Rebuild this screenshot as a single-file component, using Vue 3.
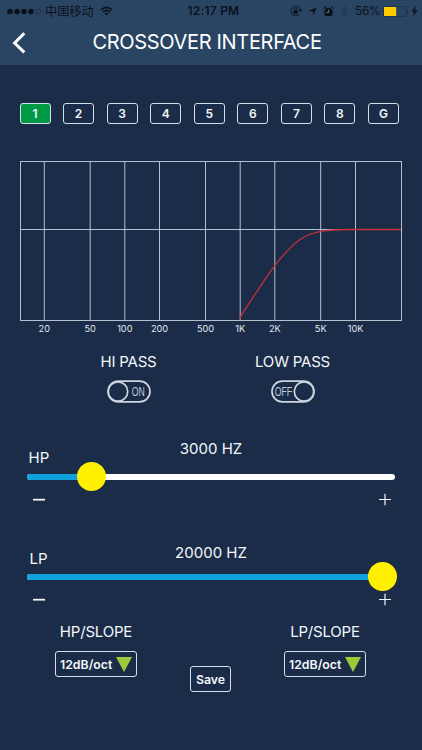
<script setup>
import { ref, computed } from 'vue'

const channels = ['1', '2', '3', '4', '5', '6', '7', '8', 'G']
const activeChannel = ref('1')

// x positions of the frequency grid lines
const ticks = [
  { label: '20', x: 44.3 },
  { label: '50', x: 90.2 },
  { label: '100', x: 124.8 },
  { label: '200', x: 159.5 },
  { label: '500', x: 205.5 },
  { label: '1K', x: 240.2 },
  { label: '2K', x: 274.8 },
  { label: '5K', x: 320.7 },
  { label: '10K', x: 355.5 }
]

const hiPass = ref(true)
const lowPass = ref(false)

const sliders = ref([
  { name: 'HP', hz: 3000, pos: 64 },
  { name: 'LP', hz: 20000, pos: 355 }
])

const slopes = ['HP', 'LP']

const switches = computed(() => [
  { name: 'HI PASS', on: hiPass.value },
  { name: 'LOW PASS', on: lowPass.value }
])

const toggle = (index) => {
  if (index === 0) hiPass.value = !hiPass.value
  else lowPass.value = !lowPass.value
}
</script>

<template>
  <div class="screen">
    <header class="header">
      <div class="status-bar">
        <div class="status-left">
          <svg class="dots" width="35" height="7" viewBox="0 0 35 7">
            <circle v-for="i in 4" :key="i" :cx="3 + (i - 1) * 7" cy="3.5" r="2.8" />
            <circle class="hollow" cx="31.2" cy="3.5" r="2.5" />
          </svg>
          <span class="carrier">中国移动</span>
          <svg class="wifi" width="13" height="10" viewBox="0 0 13 10">
            <path d="M1 3.8Q6.5 -1.2 12 3.8M3 6Q6.5 2.9 10 6" />
            <path class="solid" d="M4.6 7.4Q6.5 6 8.4 7.4L6.5 9.4Z" />
          </svg>
        </div>
        <span class="time">12:17 PM</span>
        <div class="status-right">
          <svg class="lock" width="12" height="12" viewBox="0 0 12 12">
            <path class="line" d="M9.4 9.2A4.8 4.8 0 1 1 10.6 5.2" />
            <path d="M8.8 5H12L10.4 7.3Z" />
            <path class="line" d="M4.3 5.6V4.4a1.4 1.4 0 0 1 2.8 0v1.2" />
            <rect x="3.4" y="5.3" width="4.6" height="3.4" />
          </svg>
          <svg class="arrow" width="9" height="9" viewBox="0 0 9 9">
            <path d="M8.7 0.3L5.3 8.7L4.8 4.2L0.3 3.9Z" />
          </svg>
          <svg class="alarm" width="11" height="11" viewBox="0 0 11 11">
            <circle cx="5.5" cy="6" r="4.3" />
            <path d="M0.5 3.2A2.2 2.2 0 0 1 3.6 0.8ZM10.5 3.2A2.2 2.2 0 0 0 7.4 0.8ZM2 8.5L1.4 10.6L4 9.8ZM9 8.5L9.6 10.6L7 9.8Z" />
            <path class="hands" d="M5.6 3.6V6.4H3.4" />
          </svg>
          <svg class="bluetooth" width="8" height="13" viewBox="0 0 8 13">
            <path d="M0.8 3.6L6.8 9L3.9 12V1L6.8 4L0.8 9.4" />
          </svg>
          <span class="percent">56%</span>
          <svg class="battery" width="26" height="11" viewBox="0 0 26 11">
            <rect class="shell" x="0.5" y="0.6" width="22.6" height="9.8" rx="1" />
            <rect class="charge" x="1" y="1" width="12.2" height="9" />
            <path d="M24 3.7Q25.6 5.5 24 7.3Z" />
          </svg>
          <svg class="bolt" width="7" height="10" viewBox="0 0 7 10">
            <path d="M4.8 0L0.4 5.5H3L2 10L6.6 4.2H4Z" />
          </svg>
        </div>
      </div>
      <div class="nav">
        <svg class="back" width="16" height="24" viewBox="0 0 16 24">
          <path d="M13.3 2.2L3.6 12L13.3 21.3" />
        </svg>
        <h1 class="title">CROSSOVER INTERFACE</h1>
      </div>
    </header>

    <div class="channels">
      <button
        v-for="ch in channels"
        :key="ch"
        :class="['channel', { active: ch === activeChannel }]"
        @click="activeChannel = ch"
      >{{ ch }}</button>
    </div>

    <svg class="chart" width="422" height="186" viewBox="0 154 422 186">
      <rect class="grid" x="20.5" y="161.5" width="381" height="159" />
      <path class="grid" d="M20.5 229.5H401.5" />
      <g v-for="t in ticks" :key="t.label">
        <path class="grid-line" :d="`M${t.x} 161.5V320.5`" />
        <text class="tick" :x="t.x" y="332.3">{{ t.label }}</text>
      </g>
      <path class="curve" d="M239.8 319.5C240 317 241 315.7 242 314.2L256 292.8L268 274.8L275 265.4C285 252.5 292 245 300 239.5C306 235.5 313 232.5 321 231.3C329 230.1 339 229.6 350 229.5H401" />
    </svg>

    <div class="switches">
      <div v-for="(s, i) in switches" :key="s.name" class="switch-item">
        <span class="label">{{ s.name }}</span>
        <svg class="switch" width="44" height="23" viewBox="0 0 44 23" @click="toggle(i)">
          <rect x="1" y="1.1" width="42" height="20.8" rx="10.4" />
          <circle :cx="s.on ? 11 : 33" cy="11.5" r="9.7" />
          <text :x="s.on ? 31.2 : 12.4" y="16.2" :textLength="s.on ? 13 : 17.5" lengthAdjust="spacingAndGlyphs">{{ s.on ? 'ON' : 'OFF' }}</text>
        </svg>
      </div>
    </div>

    <section v-for="s in sliders" :key="s.name" :class="['slider', s.name.toLowerCase()]">
      <div class="slider-head">
        <span class="name">{{ s.name }}</span>
        <span class="value">{{ s.hz }} HZ</span>
      </div>
      <div class="track">
        <div class="fill" :style="{ width: s.pos + 'px' }"></div>
        <div class="knob" :style="{ left: s.pos + 'px' }"></div>
      </div>
      <div class="steps">
        <svg width="12" height="13" viewBox="0 0 12 13"><path class="minus" d="M0 6.7H12" /></svg>
        <svg width="12" height="13" viewBox="0 0 12 13"><path d="M0 6.5H12M6 0.7V12.3" /></svg>
      </div>
    </section>

    <footer class="footer">
      <div v-for="(name, i) in slopes" :key="name" :class="['slope', { last: i === 1 }]">
        <span class="label">{{ name }}/SLOPE</span>
        <button class="select">
          <span>12dB/oct</span>
          <svg width="16" height="15" viewBox="0 0 16 15"><path d="M0 0H16L8 15Z" /></svg>
        </button>
      </div>
      <button class="save">Save</button>
    </footer>
  </div>
</template>

<style>
body {
  margin: 0;
  background: #1a2c47;
}
</style>

<style scoped>
.screen {
  width: 422px;
  height: 750px;
  overflow: hidden;
  background: #1a2c47;
  color: #f4f8fc;
  font-family: Inter, "Noto Sans CJK SC", sans-serif;
}

svg {
  display: block;
  flex: none;
}

button {
  box-sizing: border-box;
  padding: 0;
  border: 1px solid #d5e0ec;
  border-radius: 3px;
  background: transparent;
  color: #f4f8fc;
  font-family: inherit;
  font-weight: 600;
  cursor: pointer;
}

.header {
  height: 65px;
  background: #2a4564;
}

.status-bar {
  display: grid;
  grid-template-columns: 180px 67px 175px;
  height: 21px;
  color: #0b121b;
  fill: #0b121b;
}

.status-left,
.status-right {
  display: flex;
  align-items: center;
}

.status-left {
  padding-left: 7px;
}

.hollow {
  fill: none;
  stroke: #172538;
  stroke-width: 0.6;
}

.carrier {
  width: 49px;
  margin-left: 3px;
  font-family: "Noto Sans CJK SC", sans-serif;
  font-size: 12.2px;
  line-height: 21px;
  white-space: nowrap;
}

.wifi {
  margin-left: 6px;
  fill: none;
  stroke: #0b121b;
  stroke-width: 1.7;
}

.wifi .solid {
  fill: #0b121b;
  stroke: none;
}

.time {
  font-size: 12px;
  font-weight: 600;
  line-height: 22px;
  letter-spacing: 0.2px;
  text-align: center;
  white-space: nowrap;
}

.status-right {
  padding-left: 43px;
}

.line {
  fill: none;
  stroke: #0b121b;
  stroke-width: 0.9;
}

.arrow {
  margin-left: 6px;
}

.alarm {
  margin-left: 6px;
}

.hands {
  fill: none;
  stroke: #6f88a5;
  stroke-width: 0.9;
}

.bluetooth {
  margin-left: 6px;
  fill: none;
  stroke: #1c2f48;
  stroke-width: 0.8;
}

.percent {
  width: 25px;
  margin-left: 7px;
  font-size: 12px;
  line-height: 22px;
  letter-spacing: -0.4px;
}

.battery {
  margin-left: 3px;
}

.shell {
  fill: none;
  stroke: #192b42;
  stroke-width: 0.7;
}

.charge {
  fill: #fc0;
}

.bolt {
  margin-left: 2px;
}

.nav {
  display: flex;
  align-items: center;
  height: 44px;
}

.back {
  margin-left: 11px;
  fill: none;
  stroke: #fff;
  stroke-width: 3;
}

.title {
  margin: -2px 0 0 65.5px;
  color: #fff;
  font-size: 20px;
  font-weight: 400;
  line-height: 44px;
  letter-spacing: -0.33px;
  white-space: nowrap;
}

.channels {
  display: flex;
  justify-content: space-between;
  padding: 38px 23px 0 19.5px;
}

.channel {
  width: 31px;
  height: 21px;
  font-size: 12px;
  line-height: 19px;
}

.channel.active {
  background: #009a47;
}

.chart {
  margin-top: 30px;
}

.grid,
.grid-line {
  fill: none;
  stroke: #b5c0cf;
  stroke-width: 1;
}

.tick {
  fill: #e3eaf2;
  font-size: 9.2px;
  text-anchor: middle;
}

.curve {
  fill: none;
  stroke: #c5303c;
  stroke-width: 1.3;
}

.switches {
  display: flex;
  gap: 64px;
  height: 86px;
  padding: 12px 0 0 78.5px;
}

.switch-item {
  display: flex;
  flex-direction: column;
  align-items: center;
  width: 100px;
}

.label,
.name,
.value {
  font-size: 15px;
  line-height: 20px;
  white-space: nowrap;
}

.label {
  letter-spacing: -0.2px;
}

.switch {
  margin-top: 8px;
  cursor: pointer;
}

.switch rect,
.switch circle {
  fill: #1a2c47;
  stroke: #ccd6e0;
  stroke-width: 1.7;
}

.switch text {
  fill: #bfccda;
  font-family: "Liberation Sans", sans-serif;
  font-size: 13.2px;
  text-anchor: middle;
}

.slider {
  width: 368px;
  height: 101.5px;
  margin-left: 27px;
}

.slider.lp {
  height: 82.5px;
}

.slider-head {
  display: grid;
  grid-template-columns: 100px 168px 100px;
}

.hp .slider-head {
  height: 34.5px;
  padding-top: 1px;
}

.lp .slider-head {
  height: 30.5px;
  padding-top: 3.5px;
}

.name {
  padding: 8.5px 0 0 1.5px;
}

.lp .name {
  padding: 5.5px 0 0 2.5px;
}

.value {
  text-align: center;
}

.track {
  position: relative;
  height: 6px;
  border-radius: 3px;
  background: #fff;
}

.fill {
  height: 6px;
  border-radius: 3px 0 0 3px;
  background: #10a0da;
}

.knob {
  position: absolute;
  top: -12px;
  width: 29px;
  height: 29px;
  margin-left: -14.5px;
  border-radius: 50%;
  background: #fff000;
}

.steps {
  display: flex;
  justify-content: space-between;
  padding: 13px 4px 0 6px;
  fill: none;
  stroke: #f4f8fc;
  stroke-width: 1.2;
}

.minus {
  stroke-width: 1.8;
}

.footer {
  display: grid;
  grid-template-columns: 82px 147px 82px;
  padding: 0 56px 0 55px;
}

.slope {
  display: flex;
  flex-direction: column;
  align-items: center;
  grid-row: 1;
  grid-column: 1;
}

.slope.last {
  grid-column: 3;
}

.select {
  display: flex;
  align-items: center;
  justify-content: space-between;
  width: 82px;
  height: 26px;
  margin-top: 9px;
  padding: 0 4px;
  font-size: 12.3px;
}

.select svg {
  fill: #9bcb3b;
}

.save {
  grid-row: 1;
  grid-column: 2;
  justify-self: center;
  width: 41px;
  height: 26px;
  margin-top: 44px;
  font-size: 12.3px;
}
</style>
